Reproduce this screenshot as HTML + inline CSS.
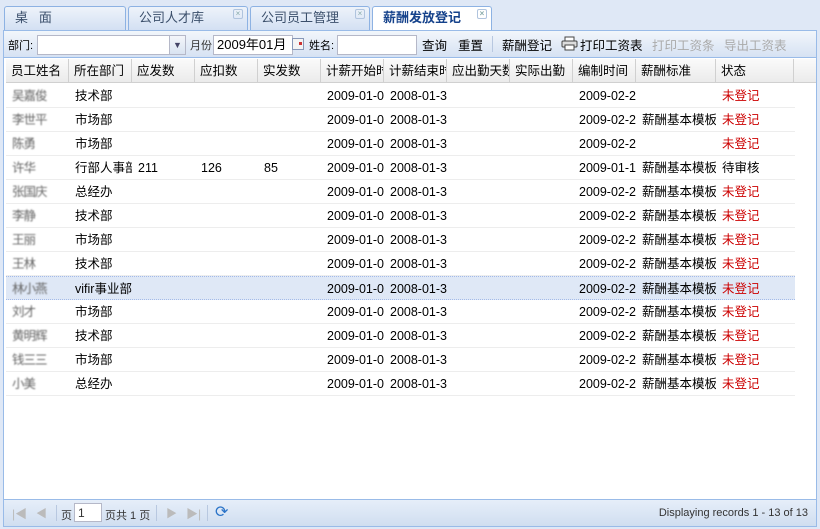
<!DOCTYPE html>
<html><head><meta charset="utf-8"><style>
*{box-sizing:border-box;margin:0;padding:0}
body{width:820px;height:529px;overflow:hidden;background:#dfe8f6;font-family:"Liberation Sans","Noto Sans CJK SC",sans-serif;font-size:12px;color:#000;position:relative}
.abs{position:absolute}
.tab{position:absolute;top:6px;height:24px;border:1px solid #8db2e3;border-bottom:none;border-radius:3px 3px 0 0;background:linear-gradient(#eef3fa,#d3e0f3);color:#3b4f6b;font-size:13px;line-height:22px;padding-left:10px}
.tab .x{position:absolute;right:4px;top:2px;width:10px;height:10px;border:1px solid #b0c4de;border-radius:2px;font-size:8px;line-height:8px;text-align:center;color:#8aa}
.panel{position:absolute;left:3px;top:30px;width:814px;height:497px;border:1px solid #99bbe8;background:#fff}
.tb{position:absolute;left:0;top:0;width:812px;height:27px;background:linear-gradient(#f2f6fb,#d6e2f3);border-bottom:1px solid #99bbe8}
.inp{position:absolute;background:#fff;border:1px solid #b5b8c8;height:20px;font-size:13px;line-height:18px;padding-left:3px}
.hd{position:absolute;left:2px;top:28px;width:810px;height:24px;background:linear-gradient(#fafafa,#ebebeb);border-bottom:1px solid #d0d0d0}
.hc{position:absolute;top:0;height:24px;line-height:24px;padding-left:5px;border-right:1px solid #d0d0d0;overflow:hidden;white-space:nowrap;font-size:12.5px}
.row{position:absolute;left:2px;width:789px;height:24px;border-bottom:1px solid #ededed}
.row.sel{background:#dfe8f6;border-top:1px dotted #a3bae9;border-bottom:1px dotted #a3bae9}
.c{position:absolute;top:1px;line-height:23px;padding-left:6px;white-space:nowrap;overflow:hidden;font-size:12.5px}
.red{color:#c00}
.ft{position:absolute;left:0;top:468px;width:812px;height:27px;background:linear-gradient(#e6eef9,#d0def0);border-top:1px solid #99bbe8;font-size:12px;color:#333}
.blur{color:#666;letter-spacing:-1px;filter:blur(0.7px)}
</style></head><body>
<div class="tab" style="left:4px;width:122px">桌 &nbsp; 面</div>
<div class="tab" style="left:128px;width:120px">公司人才库<span class="x">×</span></div>
<div class="tab" style="left:250px;width:120px">公司员工管理<span class="x">×</span></div>
<div class="tab" style="left:372px;width:120px;background:#fff;color:#15428b;font-weight:bold;height:25px;border-color:#8db2e3">薪酬发放登记<span class="x">×</span></div>
<div class="panel">
 <div class="tb">
  <span class="abs" style="left:4px;top:6px;font-size:11px">部门:</span>
  <div class="inp" style="left:33px;top:4px;width:135px"></div>
  <div class="abs" style="left:165px;top:4px;width:17px;height:20px;background:linear-gradient(#f4f6fa,#d9e3f1);border:1px solid #b5b8c8;font-size:9px;text-align:center;line-height:18px;color:#446">▼</div>
  <span class="abs" style="left:186px;top:6px;font-size:11px;color:#333">月份</span>
  <div class="inp" style="left:209px;top:4px;width:80px">2009年01月</div>
  <div class="abs" style="left:288px;top:7px;width:12px;height:12px;border:1px solid #8898b8;background:#f4f4f4"><div style="margin:3px 0 0 6px;width:3px;height:3px;background:#c33"></div></div>
  <span class="abs" style="left:305px;top:6px;font-size:11px">姓名:</span>
  <div class="inp" style="left:333px;top:4px;width:80px"></div>
  <span class="abs" style="left:418px;top:4px;font-size:12.5px">查询</span>
  <span class="abs" style="left:454px;top:4px;font-size:12.5px">重置</span>
  <div class="abs" style="left:488px;top:5px;width:1px;height:16px;background:#b8c8e0"></div>
  <span class="abs" style="left:498px;top:4px;font-size:12.5px">薪酬登记</span>
  <svg class="abs" style="left:557px;top:5px" width="17" height="15" viewBox="0 0 17 15"><rect x="4" y="1" width="9" height="5" fill="#fff" stroke="#444"/><rect x="1" y="5" width="15" height="6" rx="1" fill="#ddd" stroke="#444"/><rect x="4" y="9" width="9" height="5" fill="#fff" stroke="#444"/></svg>
  <span class="abs" style="left:576px;top:4px;font-size:12.5px">打印工资表</span>
  <span class="abs" style="left:648px;top:4px;font-size:12.5px;color:#aaa">打印工资条</span>
  <span class="abs" style="left:720px;top:4px;font-size:12.5px;color:#aaa">导出工资表</span>
 </div>
 <div class="hd">
  <div class="hc" style="left:0;width:63px">员工姓名</div>
  <div class="hc" style="left:63px;width:63px">所在部门</div>
  <div class="hc" style="left:126px;width:63px">应发数</div>
  <div class="hc" style="left:189px;width:63px">应扣数</div>
  <div class="hc" style="left:252px;width:63px">实发数</div>
  <div class="hc" style="left:315px;width:63px">计薪开始时间</div>
  <div class="hc" style="left:378px;width:63px">计薪结束时间</div>
  <div class="hc" style="left:441px;width:63px">应出勤天数</div>
  <div class="hc" style="left:504px;width:63px">实际出勤</div>
  <div class="hc" style="left:567px;width:63px">编制时间</div>
  <div class="hc" style="left:630px;width:80px">薪酬标准</div>
  <div class="hc" style="left:710px;width:78px">状态</div>
 </div>
 <div id="rows"></div>
 <div class="ft">
  <span class="abs" style="left:8px;top:5px;color:#bbb;font-size:12px">|◀</span>
  <span class="abs" style="left:32px;top:5px;color:#bbb;font-size:11px">◀</span>
  <div class="abs" style="left:52px;top:5px;width:1px;height:16px;background:#b8c8e0"></div>
  <span class="abs" style="left:57px;top:7px;font-size:11px">页</span>
  <div class="inp" style="left:70px;top:3px;width:28px;height:19px;font-size:12px">1</div>
  <span class="abs" style="left:101px;top:7px;font-size:11px">页共 1 页</span>
  <div class="abs" style="left:152px;top:5px;width:1px;height:16px;background:#b8c8e0"></div>
  <span class="abs" style="left:162px;top:5px;color:#bbb;font-size:11px">▶</span>
  <span class="abs" style="left:182px;top:5px;color:#bbb;font-size:12px">▶|</span>
  <div class="abs" style="left:203px;top:5px;width:1px;height:16px;background:#b8c8e0"></div>
  <span class="abs" style="left:211px;top:2px;color:#2a73c8;font-size:16px">⟳</span>
  <span class="abs" style="right:8px;top:7px;font-size:11px">Displaying records 1 - 13 of 13</span>
 </div>
</div>
<script>
var d=[["吴嘉俊","技术部","","","","","2009-02-2","","未登记"],["李世平","市场部","","","","","2009-02-2","薪酬基本模板","未登记"],["陈勇","市场部","","","","","2009-02-2","","未登记"],["许华","行部人事部","211","126","85","","2009-01-1","薪酬基本模板","待审核"],["张国庆","总经办","","","","","2009-02-2","薪酬基本模板","未登记"],["李静","技术部","","","","","2009-02-2","薪酬基本模板","未登记"],["王丽","市场部","","","","","2009-02-2","薪酬基本模板","未登记"],["王林","技术部","","","","","2009-02-2","薪酬基本模板","未登记"],["林小燕","vifir事业部","","","","","2009-02-2","薪酬基本模板","未登记"],["刘才","市场部","","","","","2009-02-2","薪酬基本模板","未登记"],["黄明辉","技术部","","","","","2009-02-2","薪酬基本模板","未登记"],["钱三三","市场部","","","","","2009-02-2","薪酬基本模板","未登记"],["小美","总经办","","","","","2009-02-2","薪酬基本模板","未登记"]];
var h="";d.forEach(function(r,i){var t=53+i*24;h+='<div class="row'+(i==8?' sel':'')+'" style="top:'+t+'px">'+
'<div class="c blur" style="left:0;width:63px">'+r[0]+'</div><div class="c" style="left:63px;width:63px">'+r[1]+'</div><div class="c" style="left:126px;width:63px">'+r[2]+'</div><div class="c" style="left:189px;width:63px">'+r[3]+'</div><div class="c" style="left:252px;width:63px">'+r[4]+'</div><div class="c" style="left:315px;width:63px">2009-01-0</div><div class="c" style="left:378px;width:63px">2008-01-3</div><div class="c" style="left:567px;width:63px">'+r[6]+'</div><div class="c" style="left:630px;width:80px">'+r[7]+'</div><div class="c'+(r[8]=="未登记"?" red":"")+'" style="left:710px;width:78px">'+r[8]+'</div></div>';});
document.getElementById("rows").innerHTML=h;
</script>
</body></html>
